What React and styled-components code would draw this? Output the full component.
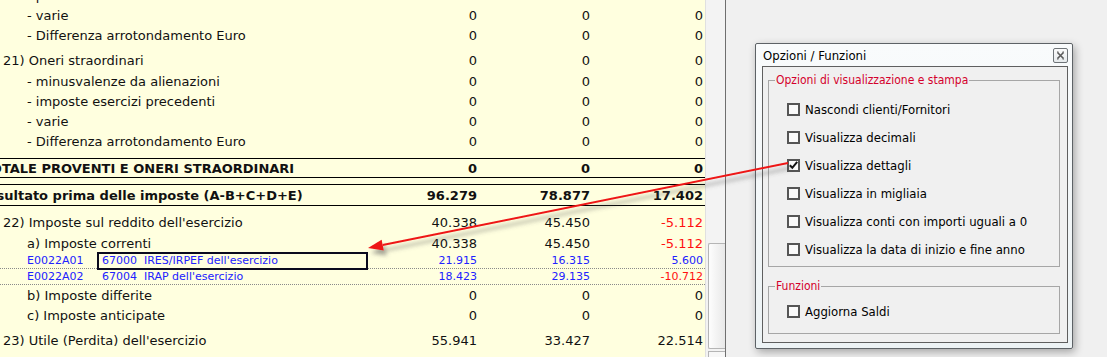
import React from 'react';
import styled, { createGlobalStyle } from 'styled-components';

const Global = createGlobalStyle`
  html, body { margin: 0; padding: 0; }
  body { width: 1107px; height: 357px; overflow: hidden; background: #f0f0f0; }
`;

const Screen = styled.div`
  position: relative;
  display: flex;
  width: 1107px;
  height: 357px;
  overflow: hidden;
  background: #f0f0f0;
`;

const ReportPane = styled.div`
  width: 705px;
  height: 100%;
  flex: none;
  background: #ffffdf;
  overflow: hidden;
`;

const Sheet = styled.div`
  width: 725px;
  margin: -15px 0 0 -20px;
  display: flex;
  flex-direction: column;
  font-family: "DejaVu Sans", Verdana, sans-serif;
  font-size: 13px;
  color: #111;
`;

const rowKinds = {
  item: `height: 20px;`,
  group: `height: 26px; padding-top: 5px; padding-bottom: 1px;`,
  total: `height: 20px; margin-top: 7px; border-top: 1px solid #000; border-bottom: 1px solid #000; font-weight: bold;`,
  result: `height: 22px; margin-top: 6px; margin-bottom: 1px; border-top: 1px solid #000; border-bottom: 1px solid #000; font-weight: bold;`,
  detail: `height: 16px; border-bottom: 1px dotted #8a8a8a; font-size: 11px; color: #2121ff;`,
};

const Row = styled.div`
  display: flex;
  align-items: center;
  box-sizing: border-box;
  padding-right: 2px;
  white-space: nowrap;
  flex: none;
  ${(p) => rowKinds[p.$kind]}
`;

const indents = { item: 47, group: 23, total: 2, result: 2, detail: 47 };

const Label = styled.div`
  flex: 1;
  min-width: 0;
  display: flex;
  align-items: center;
  padding-left: ${(p) => indents[p.$kind]}px;
`;

const Code = styled.span`
  width: 75px;
  flex: none;
`;

const Desc = styled.span`
  box-sizing: border-box;
  width: 271px;
  flex: none;
  height: 18px;
  margin-left: -5px;
  padding-left: 3px;
  display: flex;
  align-items: center;
  white-space: pre;
  border: 2px solid ${(p) => (p.$focused ? '#0a0a1e' : 'transparent')};
`;

const Num = styled.div`
  width: 113px;
  flex: none;
  text-align: right;
  color: ${(p) => (p.$neg ? '#ff1010' : 'inherit')};
`;

const ScrollBar = styled.div`
  width: 20px;
  flex: none;
  display: flex;
  flex-direction: column;
  background: #f3f3f3;
  border-right: 1px solid #6f6f6f;
  box-shadow: inset 1px 0 0 #e0e0e0;
`;

const Track = styled.div`
  height: 243px;
  flex: none;
`;

const Thumb = styled.div`
  height: 106px;
  flex: none;
  margin-left: 3px;
  box-sizing: border-box;
  border: 1px solid #b5b5b5;
  border-right: none;
  border-radius: 2px 0 0 2px;
  background: linear-gradient(to right, #fdfdfd, #e8e8e8);
`;

const ScrollButton = styled.div`
  height: 20px;
  flex: none;
  margin: 2px 0 0 3px;
  box-sizing: border-box;
  border: 1px solid #b5b5b5;
  border-right: none;
  background: #f7f7f7;
`;

const Desktop = styled.div`
  flex: 1;
  background: #f0f0f0;
`;

const Dialog = styled.div`
  position: absolute;
  left: 755px;
  top: 43px;
  width: 318px;
  height: 306px;
  box-sizing: border-box;
  border: 1px solid #5d6266;
  border-radius: 2px;
  background: linear-gradient(to bottom, #f9fbfc, #edf3f5);
  box-shadow: 2px 3px 9px rgba(0, 0, 0, 0.32);
  display: flex;
  flex-direction: column;
  padding: 0 4px 5px 6px;
  font-family: "DejaVu Sans Condensed", Tahoma, "DejaVu Sans", sans-serif;
  font-size: 13px;
  color: #000;
`;

const TitleBar = styled.div`
  height: 22px;
  flex: none;
  display: flex;
  align-items: center;
  justify-content: space-between;
  padding-left: 1px;
`;

const CloseButton = styled.div`
  width: 15px;
  height: 15px;
  box-sizing: border-box;
  border: 1px solid #6f7478;
  border-radius: 2px;
  background: linear-gradient(#fbfbfb, #e6eaec);
  display: flex;
  align-items: center;
  justify-content: center;
`;

const Frame = styled.div`
  flex: 1;
  border: 1px solid #5f5f5f;
  background: #f0f0f0;
  padding: 0 7px 0 5px;
  display: flex;
  flex-direction: column;
`;

const GroupBox = styled.fieldset`
  margin: ${(p) => p.$mt}px 0 0 0;
  padding: ${(p) => p.$pt}px 0 ${(p) => p.$pb}px 18px;
  border: 1px solid #a6a6a6;
  display: flex;
  flex-direction: column;
  min-width: 0;
`;

const Legend = styled.legend`
  padding: 0 1px;
  margin-left: -12px;
  color: #d4002c;
  line-height: 15px;
  font-size: 12px;
`;

const Option = styled.label`
  height: 28px;
  display: flex;
  align-items: center;
  gap: 5px;
`;

const Box = styled.span`
  width: 13px;
  height: 13px;
  box-sizing: border-box;
  border: 2px solid #555;
  background: #fafafa;
  display: flex;
  align-items: center;
  justify-content: center;
  flex: none;
`;

const ArrowLayer = styled.svg`
  position: absolute;
  left: 0;
  top: 0;
  pointer-events: none;
`;

const rows = [
  { kind: 'item', label: '- plusvalenze da alienazioni', values: ['0', '0', '0'] },
  { kind: 'item', label: '- varie', values: ['0', '0', '0'] },
  { kind: 'item', label: '- Differenza arrotondamento Euro', values: ['0', '0', '0'] },
  { kind: 'group', label: '21) Oneri straordinari', values: ['0', '0', '0'] },
  { kind: 'item', label: '- minusvalenze da alienazioni', values: ['0', '0', '0'] },
  { kind: 'item', label: '- imposte esercizi precedenti', values: ['0', '0', '0'] },
  { kind: 'item', label: '- varie', values: ['0', '0', '0'] },
  { kind: 'item', label: '- Differenza arrotondamento Euro', values: ['0', '0', '0'] },
  { kind: 'total', label: 'TOTALE PROVENTI E ONERI STRAORDINARI', values: ['0', '0', '0'] },
  { kind: 'result', label: 'Risultato prima delle imposte (A-B+C+D+E)', values: ['96.279', '78.877', '17.402'] },
  { kind: 'group', label: "22) Imposte sul reddito dell'esercizio", values: ['40.338', '45.450', '-5.112'] },
  { kind: 'item', label: 'a) Imposte correnti', values: ['40.338', '45.450', '-5.112'] },
  { kind: 'detail', code: 'E0022A01', desc: "67000  IRES/IRPEF dell'esercizio", focused: true, values: ['21.915', '16.315', '5.600'] },
  { kind: 'detail', code: 'E0022A02', desc: "67004  IRAP dell'esercizio", values: ['18.423', '29.135', '-10.712'] },
  { kind: 'item', label: 'b) Imposte differite', values: ['0', '0', '0'] },
  { kind: 'item', label: 'c) Imposte anticipate', values: ['0', '0', '0'] },
  { kind: 'group', label: "23) Utile (Perdita) dell'esercizio", values: ['55.941', '33.427', '22.514'] },
];

const displayOptions = [
  { label: 'Nascondi clienti/Fornitori', checked: false },
  { label: 'Visualizza decimali', checked: false },
  { label: 'Visualizza dettagli', checked: true },
  { label: 'Visualizza in migliaia', checked: false },
  { label: 'Visualizza conti con importi uguali a 0', checked: false },
  { label: 'Visualizza la data di inizio e fine anno', checked: false },
];

function CheckOption({ label, checked }) {
  return (
    <Option>
      <Box>
        {checked && (
          <svg width="9" height="9" viewBox="0 0 9 9">
            <path d="M0.8 4.2 L3.3 6.8 L8.2 0.8" fill="none" stroke="#111" strokeWidth="2" />
          </svg>
        )}
      </Box>
      {label}
    </Option>
  );
}

function Arrow() {
  const x1 = 788, y1 = 163, tx = 368, ty = 248;
  const dx = tx - x1, dy = ty - y1;
  const len = Math.hypot(dx, dy);
  const ux = dx / len, uy = dy / len;
  const bx = tx - 15 * ux, by = ty - 15 * uy;
  const nx = -uy, ny = ux;
  const head = `${tx},${ty} ${bx + 5.5 * nx},${by + 5.5 * ny} ${bx - 5.5 * nx},${by - 5.5 * ny}`;
  return (
    <ArrowLayer width="1107" height="357" viewBox="0 0 1107 357">
      <defs>
        <filter id="arrowShadow" x="-10%" y="-30%" width="120%" height="160%">
          <feDropShadow dx="3" dy="5" stdDeviation="2" floodColor="#555" floodOpacity="0.55" />
        </filter>
      </defs>
      <g filter="url(#arrowShadow)">
        <line x1={x1} y1={y1} x2={bx} y2={by} stroke="#ee1515" strokeWidth="2" />
        <polygon points={head} fill="#ee1515" />
      </g>
    </ArrowLayer>
  );
}

export default function App() {
  return (
    <>
      <Global />
      <Screen>
        <ReportPane>
          <Sheet>
            {rows.map((r, i) => (
              <Row key={i} $kind={r.kind}>
                <Label $kind={r.kind}>
                  {r.kind === 'detail' ? (
                    <>
                      <Code>{r.code}</Code>
                      <Desc $focused={r.focused}>{r.desc}</Desc>
                    </>
                  ) : (
                    r.label
                  )}
                </Label>
                {r.values.map((v, j) => (
                  <Num key={j} $neg={v.startsWith('-')}>{v}</Num>
                ))}
              </Row>
            ))}
          </Sheet>
        </ReportPane>
        <ScrollBar>
          <Track />
          <Thumb />
          <ScrollButton />
        </ScrollBar>
        <Desktop />
        <Dialog>
          <TitleBar>
            <span>Opzioni / Funzioni</span>
            <CloseButton>
              <svg width="9" height="9" viewBox="0 0 9 9">
                <path d="M1.5 1.5 L7.5 7.5 M7.5 1.5 L1.5 7.5" stroke="#5a5a5a" strokeWidth="1.6" />
                <path d="M1 1 h1.5 M6.5 1 h1.5 M1 8 h1.5 M6.5 8 h1.5" stroke="#5a5a5a" strokeWidth="1" />
              </svg>
            </CloseButton>
          </TitleBar>
          <Frame>
            <GroupBox $mt={6} $pt={7} $pb={3}>
              <Legend>Opzioni di visualizzazione e stampa</Legend>
              {displayOptions.map((o) => (
                <CheckOption key={o.label} label={o.label} checked={o.checked} />
              ))}
            </GroupBox>
            <GroupBox $mt={12} $pt={3} $pb={8}>
              <Legend>Funzioni</Legend>
              <CheckOption label="Aggiorna Saldi" checked={false} />
            </GroupBox>
          </Frame>
        </Dialog>
        <Arrow />
      </Screen>
    </>
  );
}
